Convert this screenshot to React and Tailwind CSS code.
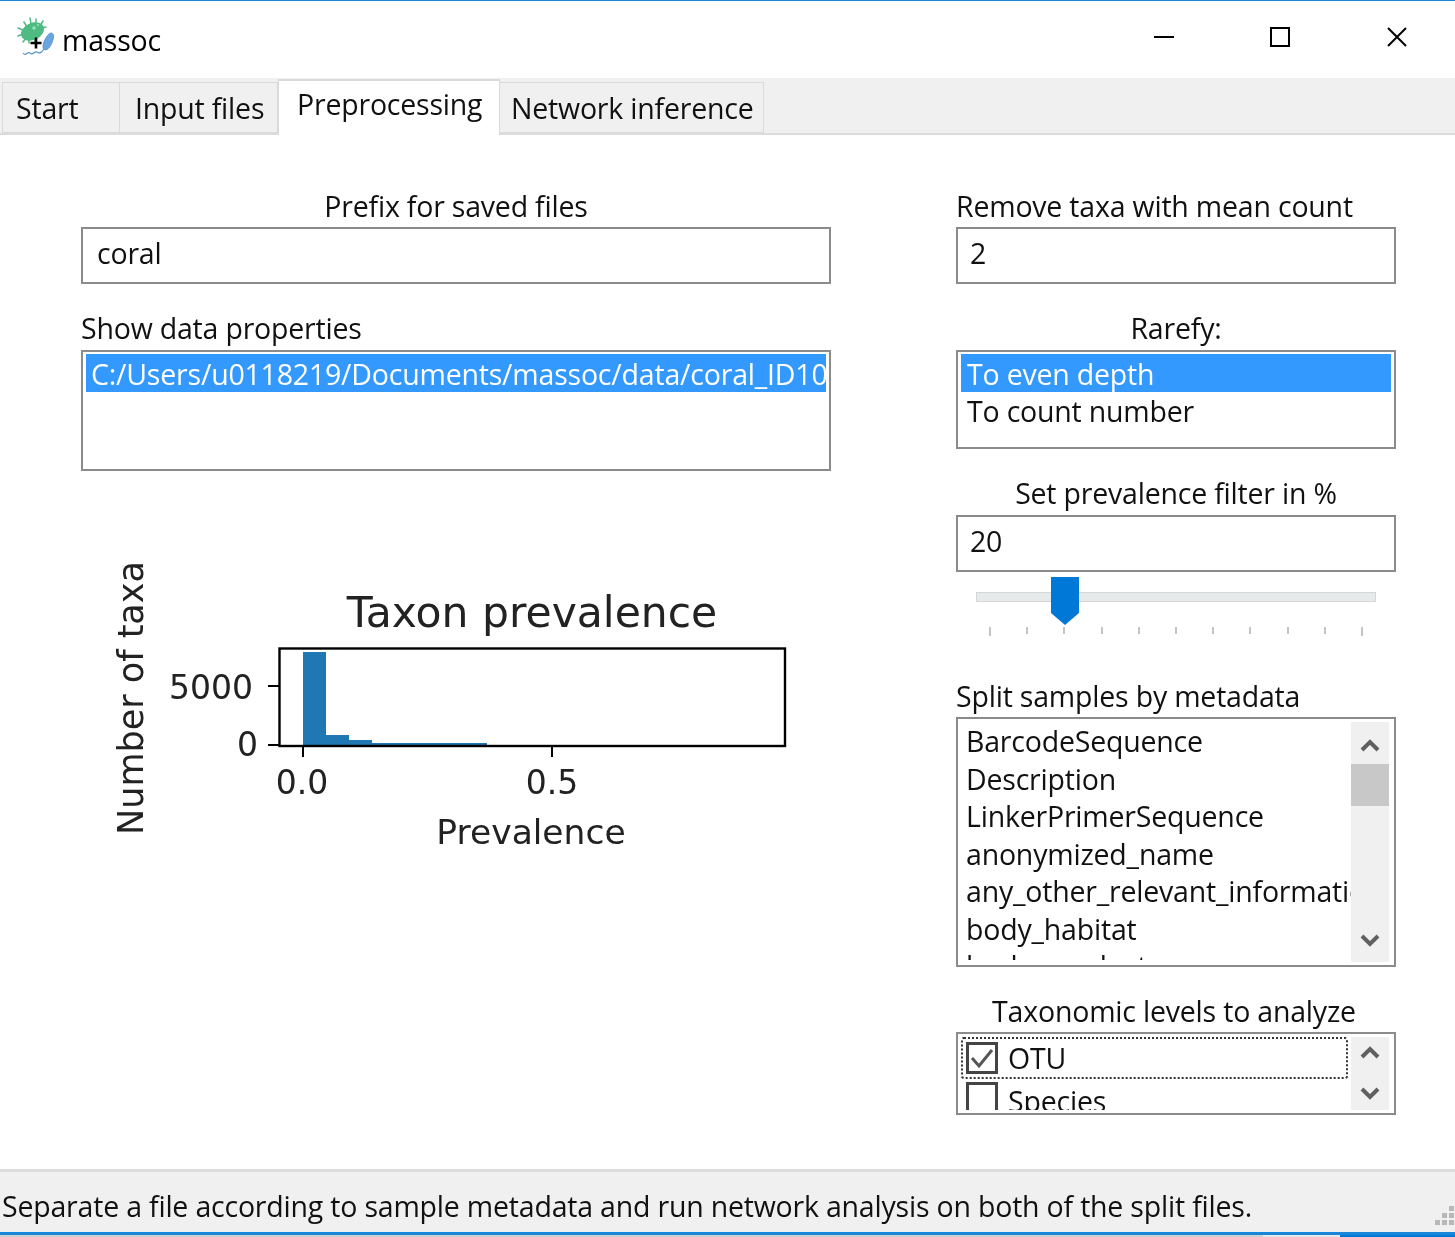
const font = { fontFamily: '"Open Sans", "Noto Sans", sans-serif', letterSpacing: '-0.2px' };

function Logo() {
  return (
    <svg width="40" height="44" viewBox="17 16 40 44" className="shrink-0">
      <g stroke="#4fba82" strokeWidth="1.5" strokeLinecap="round">
        <path d="M30 18 L31 24" /><path d="M36 19 L36 24" /><path d="M43 21 L40 26" /><path d="M46 27 L41 28" />
        <path d="M24 22 L27 27" /><path d="M18 28 L23 30" /><path d="M18 36 L23 34" /><path d="M23 42 L26 38" /><path d="M29 43 L29 39" /><path d="M35 41 L34 37" />
      </g>
      <ellipse cx="32.5" cy="31.5" rx="12" ry="8.5" transform="rotate(-24 32.5 31.5)" fill="#4fba82" />
      <circle cx="34" cy="28" r="1.8" fill="#8fe6b6" />
      <circle cx="38" cy="25" r="1.1" fill="#8fe6b6" />
      <path d="M43 47 C43 42 46 37 49 34 C51 32 54 33 53.5 37 C53 42 50 48 47 49.5 C45 50.5 43 49.5 43 47 Z" fill="#6aa5e0" stroke="#4d8ed0" strokeWidth="0.8" />
      <path d="M23 53 C26 57 27 51 30 53 C33 56 34 51 37 52 C40 54 42 52 44 49" fill="none" stroke="#5d93cc" strokeWidth="1.2" />
      <path d="M36 37.5 V48.5 M30.5 43 H41.5" stroke="#000" strokeWidth="2.6" />
    </svg>
  );
}

function Tab({ label, className }) {
  return (
    <div className={`flex items-center border border-[#dadada] bg-[#f0f0f0] text-[#111] pt-[2px] ${className}`}>{label}</div>
  );
}

function Field({ value, wide }) {
  return (
    <div className={`h-[57px] border-2 border-[#8b8b8b] bg-white flex items-center text-[#111] pb-[3px] ${wide ? 'pl-[14px]' : 'pl-[12px]'}`}>{value}</div>
  );
}

function Label({ children, center, className = '' }) {
  return <div className={`h-[37px] leading-[32px] text-[#111] ${center ? 'text-center' : ''} ${className}`}>{children}</div>;
}

function Chevron({ up }) {
  return (
    <svg width="20" height="15" viewBox="0 0 20 15" className="block">
      <path d={up ? 'M2 13 L10 5 L18 13' : 'M2 2 L10 10 L18 2'} fill="none" stroke="#606060" strokeWidth="4" />
    </svg>
  );
}

function Chart() {
  const f = { fontFamily: '"DejaVu Sans", sans-serif', letterSpacing: '0' };
  return (
    <svg width="700" height="300" viewBox="100 560 700 300" className="block" style={f}>
      <rect x="303" y="652" width="23" height="94" fill="#1f77b4" />
      <rect x="326" y="735" width="23" height="11" fill="#1f77b4" />
      <rect x="349" y="740" width="23" height="6" fill="#1f77b4" />
      <rect x="372" y="743" width="115" height="3" fill="#1f77b4" />
      <rect x="279.5" y="648.5" width="505.5" height="97.5" fill="none" stroke="#000" strokeWidth="2.4" />
      <path d="M268 686 H279 M268 745 H279 M303 746 V757 M552 746 V757" stroke="#000" strokeWidth="2" />
      <text x="532" y="627" textAnchor="middle" fontSize="42.5" fill="#222">Taxon prevalence</text>
      <text x="253" y="699" textAnchor="end" fontSize="33" fill="#222">5000</text>
      <text x="258" y="756" textAnchor="end" fontSize="33" fill="#222">0</text>
      <text x="302" y="794" textAnchor="middle" fontSize="33" fill="#222">0.0</text>
      <text x="552" y="794" textAnchor="middle" fontSize="33" fill="#222">0.5</text>
      <text x="531" y="844" textAnchor="middle" fontSize="34.5" fill="#222">Prevalence</text>
      <text transform="translate(143 698) rotate(-90)" textAnchor="middle" fontSize="35" fill="#222">Number of taxa</text>
    </svg>
  );
}

const ticks = [9, 7, 7, 7, 7, 7, 7, 7, 7, 7, 9];

export default function App() {
  return (
    <div className="w-[1455px] h-[1237px] bg-white flex flex-col overflow-hidden text-[28.5px] leading-[37.5px] blur-[0.4px]" style={font}>
      <div className="h-px bg-[#1a86d9]" />
      <div className="h-[77px] flex items-center">
        <div className="ml-[17px] mt-[-3px]"><Logo /></div>
        <div className="ml-[5px] text-black pt-[2px]">massoc</div>
        <div className="ml-auto flex items-center h-full mt-[-6px]">
          <svg width="20" height="20" viewBox="0 0 20 20" className="mr-[96px]"><path d="M0 10 H20" stroke="#000" strokeWidth="2" /></svg>
          <svg width="20" height="20" viewBox="0 0 20 20" className="mr-[97px]"><rect x="1" y="1" width="18" height="18" fill="none" stroke="#000" strokeWidth="2" /></svg>
          <svg width="20" height="20" viewBox="0 0 20 20" className="mr-[48px]"><path d="M1 1 L19 19 M19 1 L1 19" stroke="#000" strokeWidth="2" /></svg>
        </div>
      </div>
      <div className="h-[55px] bg-[#f0f0f0] flex items-end pl-[2px] relative z-10 shrink-0">
        <Tab label="Start" className="w-[118px] h-[51px] pl-[13px]" />
        <Tab label="Input files" className="w-[158px] h-[51px] pl-[15px] border-l-0" />
        <div className="w-[222px] h-[56px] mb-[-2px] bg-white border border-b-0 border-[#dadada] border-t-2 flex items-center pl-[18px] text-[#111] pb-[7px]">Preprocessing</div>
        <Tab label="Network inference" className="w-[264px] h-[51px] pl-[11px] border-l-0" />
      </div>
      <div className="h-[1039px] shrink-0 border-t-2 border-b-[3px] border-[#dcdcdc] bg-white flex">
        <div className="ml-[81px] w-[750px] pt-[55px] flex flex-col">
          <Label center>Prefix for saved files</Label>
          <Field value="coral" wide />
          <Label className="mt-[28px] h-[38px]">Show data properties</Label>
          <div className="h-[121px] border-2 border-[#8b8b8b] px-[3px] py-[2px] overflow-hidden">
            <div className="h-[38px] bg-[#3399ff] text-white pl-[5px] whitespace-nowrap overflow-hidden pt-[2px]">C:/Users/u0118219/Documents/massoc/data/coral_ID1037</div>
          </div>
          <div className="ml-[19px] mt-[89px]"><Chart /></div>
        </div>
        <div className="ml-[125px] w-[440px] pt-[55px] flex flex-col">
          <Label>Remove taxa with mean count</Label>
          <Field value="2" />
          <Label center className="mt-[28px] h-[38px]">Rarefy:</Label>
          <div className="h-[99px] border-2 border-[#8b8b8b] px-[3px] py-[2px] flex flex-col">
            <div className="h-[38px] bg-[#3399ff] text-white pl-[6px] pt-[2px]">To even depth</div>
            <div className="pl-[6px] text-[#111] pt-[1px]">To count number</div>
          </div>
          <Label center className="mt-[28px] h-[38px]">Set prevalence filter in %</Label>
          <Field value="20" />
          <div className="relative h-[108px] shrink-0">
            <div className="absolute left-[20px] top-[20px] w-[400px] h-[10px] bg-[#e7eaea] border border-[#d6d6d6]" />
            <svg width="28" height="48" viewBox="0 0 28 48" className="absolute left-[95px] top-[5px]"><path d="M0 0 H28 V36 L14 48 L0 36 Z" fill="#0078d7" /></svg>
            <div className="absolute left-[33px] top-[55px] w-[374px] flex justify-between items-start">
              {ticks.map((h, i) => <div key={i} className={`w-[2px] bg-[#c4c4c4] ${h === 9 ? 'h-[9px]' : 'h-[7px]'}`} />)}
            </div>
          </div>
          <Label>Split samples by metadata</Label>
          <div className="h-[250px] border-2 border-[#8b8b8b] flex overflow-hidden">
            <div className="w-[393px] h-[241px] pl-[8px] pt-[4px] text-[#111] whitespace-nowrap overflow-hidden">
              <div>BarcodeSequence</div>
              <div>Description</div>
              <div>LinkerPrimerSequence</div>
              <div>anonymized_name</div>
              <div>any_other_relevant_information</div>
              <div>body_habitat</div>
              <div>body_product</div>
            </div>
            <div className="w-[38px] my-[3px] bg-[#f0f0f0] flex flex-col items-center">
              <div className="mt-[15px]"><Chevron up /></div>
              <div className="w-full h-[42px] bg-[#c8c8c8] mt-[12px]" />
              <div className="mt-auto mb-[13px]"><Chevron /></div>
            </div>
          </div>
          <Label center className="mt-[28px] pr-[4px]">Taxonomic levels to analyze</Label>
          <div className="h-[83px] border-2 border-[#8b8b8b] flex overflow-hidden">
            <div className="w-[393px] h-[76px] pl-[3px] pt-[3px] text-[#111] overflow-hidden">
              <div className="w-[387px] h-[42px] border-2 border-dotted border-[#333] rounded-[3px] flex items-center pl-[3px]">
                <svg width="32" height="32" viewBox="0 0 32 32" className="shrink-0"><rect x="1.5" y="1.5" width="29" height="29" fill="none" stroke="#444" strokeWidth="3" /><path d="M6 16 L13 24 L26 8" fill="none" stroke="#555" strokeWidth="3" /></svg>
                <span className="ml-[10px] pt-[2px]">OTU</span>
              </div>
              <div className="flex items-start pl-[5px] mt-[3px]">
                <div className="w-[32px] h-[32px] shrink-0 border-[3px] border-[#444]" />
                <span className="ml-[10px] pt-[1px]">Species</span>
              </div>
            </div>
            <div className="w-[38px] my-[3px] bg-[#f0f0f0] flex flex-col items-center">
              <div className="mt-[7px]"><Chevron up /></div>
              <div className="mt-auto mb-[8px]"><Chevron /></div>
            </div>
          </div>
        </div>
      </div>
      <div className="h-[60px] shrink-0 bg-[#f0f0f0] flex items-center relative pl-[2px] pt-[10px] text-[#111]">
        Separate a file according to sample metadata and run network analysis on both of the split files.
        <svg width="24" height="24" viewBox="0 0 24 24" className="absolute right-0 bottom-[4px]"><g fill="#b8b8b8"><rect x="18" y="2" width="5" height="5" /><rect x="11" y="9" width="5" height="5" /><rect x="18" y="9" width="5" height="5" /><rect x="4" y="16" width="5" height="5" /><rect x="11" y="16" width="5" height="5" /><rect x="18" y="16" width="5" height="5" /></g></svg>
      </div>
      <div className="h-[3px] shrink-0 bg-[#1a86d9]" />
      <div className="flex-1 flex">
        <div className="w-[1263px] bg-[#d0d0d0]" />
        <div className="w-[77px] bg-[#e8e8e8]" />
        <div className="flex-1 bg-[#0078d7]" />
      </div>
    </div>
  );
}
